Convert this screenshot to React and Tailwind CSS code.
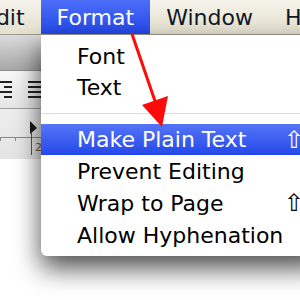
import React from 'react'

const items = [
    { label: 'Make Plain Text', shortcut: '⇧', active: true, h: 'h-[31px]' },
    { label: 'Prevent Editing', h: 'h-[32px]' },
    { label: 'Wrap to Page', shortcut: '⇧', h: 'h-[32px]' },
    { label: 'Allow Hyphenation', h: 'h-[32px]' },
]

function MenuItem({ item }) {
    return (
        <div className={`${item.h} flex items-center pl-[36px] ${item.active ? 'bg-gradient-to-b from-[#5574f6] to-[#2446ea] text-white' : 'text-black'}`}>
            <span className="w-[207px] shrink-0 whitespace-nowrap">{item.label}</span>
            {item.shortcut && <span className="text-[24px] leading-none">{item.shortcut}</span>}
        </div>
    )
}

export default function App() {
    return (
        <div className="relative w-[300px] h-[300px] overflow-hidden bg-white font-['DejaVu_Sans','Liberation_Sans',sans-serif]">
            {/* Menu bar */}
            <div className="h-[35px] flex items-center overflow-hidden border-b border-[#9d9a8e] bg-gradient-to-b from-[#f5f3ea] to-[#e5e1d0] text-[22px] text-[#101828] whitespace-nowrap">
                <div className="-ml-[34px] px-4 h-full flex items-center">Edit</div>
                <div className="px-4 h-full flex items-center text-white bg-gradient-to-b from-[#4d6ef8] to-[#2447ea]">Format</div>
                <div className="px-4 h-full flex items-center">Window</div>
                <div className="px-4 h-full flex items-center">Help</div>
            </div>

            {/* Document window behind the menu */}
            <div className="w-[41px] flex flex-col">
                <div className="h-[36px] bg-gradient-to-b from-[#dcdcdc] to-[#a8a8a8] border-b border-[#8c8c8c]" />
                <div className="h-[38px] flex items-center bg-gradient-to-b from-[#f7f7f7] to-[#e6e6e6] border-b border-[#a0a0a0]">
                    <div className="w-[15px] flex flex-col items-end gap-[3px] pr-[2px]">
                        <div className="h-[2px] w-[12px] bg-[#222]" />
                        <div className="h-[2px] w-[8px] bg-[#222]" />
                        <div className="h-[2px] w-[12px] bg-[#222]" />
                        <div className="h-[2px] w-[8px] bg-[#222]" />
                    </div>
                    <div className="w-px h-full bg-[#b5b5b5] mx-[7px]" />
                    <div className="flex flex-col gap-[3px]">
                        <div className="h-[2px] w-[15px] bg-[#222]" />
                        <div className="h-[2px] w-[15px] bg-[#222]" />
                        <div className="h-[2px] w-[15px] bg-[#222]" />
                        <div className="h-[2px] w-[15px] bg-[#222]" />
                    </div>
                </div>
                <div className="relative h-[50px] bg-gradient-to-b from-[#eeeeee] to-[#e4e4e4]">
                    <svg width="41" height="50" viewBox="0 0 41 50" className="absolute inset-0">
                        <polygon points="30,12 37,19 30,25" fill="#1a1a1a" />
                        <line x1="0" y1="28.5" x2="41" y2="28.5" stroke="#8a8a8a" strokeWidth="1" />
                        <line x1="0.5" y1="28" x2="0.5" y2="32" stroke="#8a8a8a" strokeWidth="1" />
                        <line x1="15.5" y1="28" x2="15.5" y2="32" stroke="#8a8a8a" strokeWidth="1" />
                        <line x1="31.5" y1="24" x2="31.5" y2="46" stroke="#555" strokeWidth="1" />
                    </svg>
                    <span className="absolute left-[35px] top-[33px] text-[11px] leading-none text-[#7a5a2a]">2</span>
                </div>
            </div>

            {/* Format menu */}
            <div className="absolute left-[41px] top-[35px] w-[280px] pt-[6px] pb-[5px] bg-white rounded-bl-md text-[22px] shadow-[0_12px_26px_rgba(0,0,0,0.7)]">
                <div className="h-[31px] flex items-center pl-[36px]">Font</div>
                <div className="h-[31px] flex items-center pl-[36px]">Text</div>
                <div className="h-[21px] flex items-center">
                    <div className="w-full h-px bg-[#dcdcdc]" />
                </div>
                {items.map(item => <MenuItem key={item.label} item={item} />)}
            </div>

            {/* Red annotation arrow */}
            <svg width="300" height="300" viewBox="0 0 300 300" className="absolute inset-0 pointer-events-none">
                <line x1="132" y1="34" x2="156" y2="104" stroke="#ff0a0a" strokeWidth="3" />
                <polygon points="142,105 168,96 162,127" fill="#ff0a0a" />
            </svg>
        </div>
    )
}
